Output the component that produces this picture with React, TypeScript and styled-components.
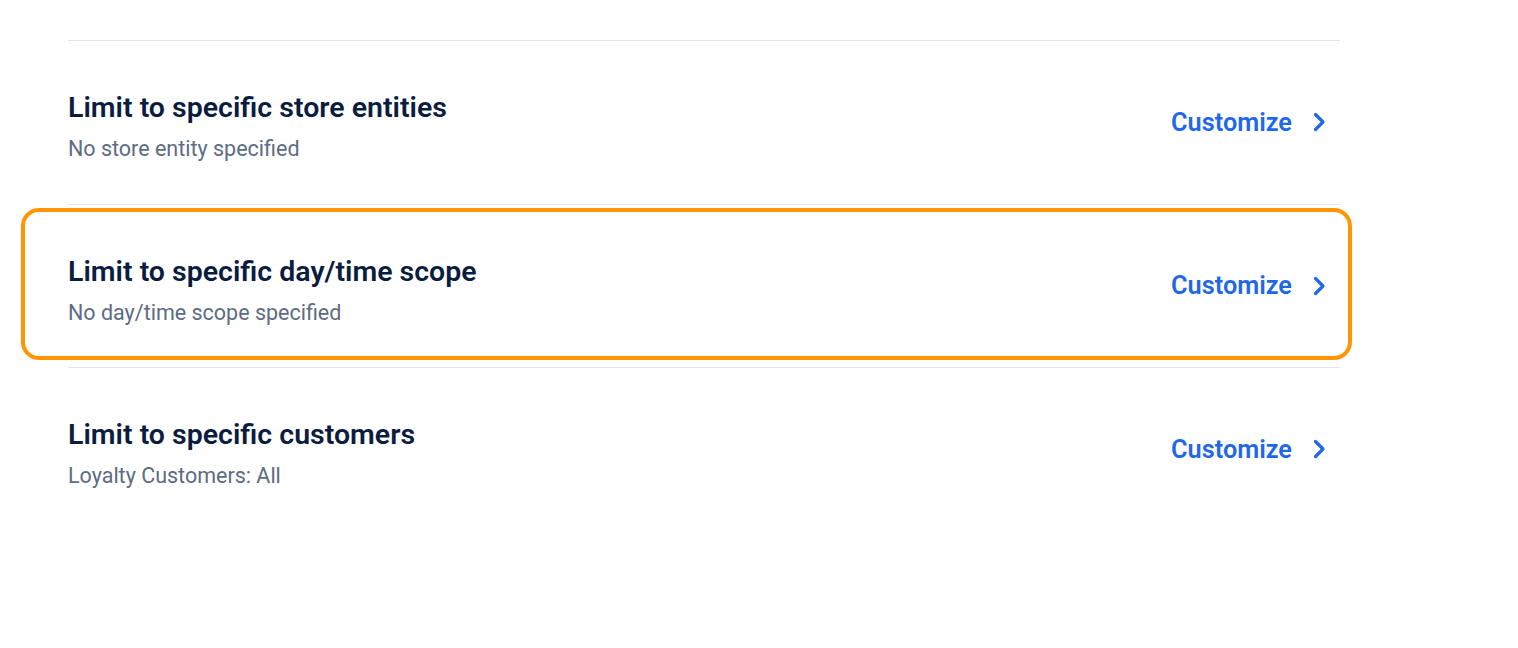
import React from "react";
import styled, { createGlobalStyle } from "styled-components";

const GlobalStyle = createGlobalStyle`
  html, body { margin: 0; padding: 0; background: #ffffff; }
  body { font-family: Roboto, "Noto Sans", "Liberation Sans", sans-serif; -webkit-font-smoothing: antialiased; }
`;

const Page = styled.div`
  padding: 40px 178px 0 68px;
`;

const List = styled.div`
  display: flex;
  flex-direction: column;
`;

const Row = styled.div<{ $highlight?: boolean }>`
  position: relative;
  display: flex;
  align-items: center;
  justify-content: space-between;
  height: 163.5px;
  border-top: 1px solid #e3e5e9;
  box-sizing: border-box;

  ${(p) =>
    p.$highlight &&
    `
    &::after {
      content: "";
      position: absolute;
      left: -47px;
      right: -12px;
      top: 3px;
      bottom: 7px;
      border: 4px solid #ff9500;
      border-radius: 18px;
      pointer-events: none;
    }
  `}
`;

const Text = styled.div`
  display: flex;
  flex-direction: column;
  gap: 10px;
  margin-top: 10px;
`;

const Title = styled.div`
  font-size: 28.5px;
  line-height: 34px;
  font-weight: 600;
  color: #0b1d3f;
`;

const Subtitle = styled.div`
  font-size: 21.5px;
  line-height: 28px;
  color: #5d6b83;
`;

const Action = styled.button`
  display: flex;
  align-items: center;
  gap: 21px;
  background: none;
  border: none;
  padding: 0 14px 0 0;
  cursor: pointer;
  font-family: inherit;
  font-size: 25.3px;
  font-weight: 600;
  color: #1f68e8;
`;

const Chevron = () => (
  <svg width="13" height="20" viewBox="0 0 13 20" fill="none">
    <path d="M2.5 2.5l7.5 7.5-7.5 7.5" stroke="#1f68e8" strokeWidth="3.2" strokeLinecap="round" strokeLinejoin="round" />
  </svg>
);

const rows = [
  { title: "Limit to specific store entities", sub: "No store entity specified" },
  { title: "Limit to specific day/time scope", sub: "No day/time scope specified", highlight: true },
  { title: "Limit to specific customers", sub: "Loyalty Customers: All" },
];

export default function App() {
  return (
    <>
      <GlobalStyle />
      <Page>
        <List>
          {rows.map((r) => (
            <Row key={r.title} $highlight={r.highlight}>
              <Text>
                <Title>{r.title}</Title>
                <Subtitle>{r.sub}</Subtitle>
              </Text>
              <Action>
                Customize
                <Chevron />
              </Action>
            </Row>
          ))}
        </List>
      </Page>
    </>
  );
}
